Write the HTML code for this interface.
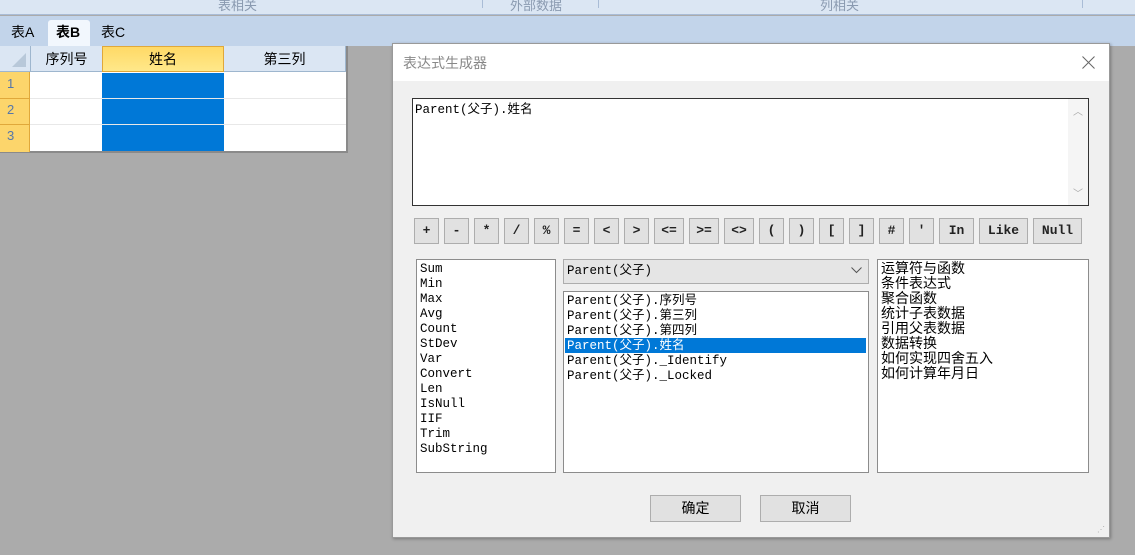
<!DOCTYPE html>
<html><head><meta charset="utf-8"><style>
*{margin:0;padding:0;box-sizing:border-box}
body{width:1135px;height:555px;overflow:hidden;background:#ababab;position:relative;font-family:"Liberation Sans","Noto Sans CJK SC",sans-serif;font-size:13px;color:#000}
.a{position:absolute}
.mono{font-family:"Liberation Mono","Noto Sans CJK SC",monospace;font-size:12.5px;line-height:15px;white-space:pre}
.btn{position:absolute;top:218px;height:26px;background:#e1e1e1;border:1px solid #adadad;text-align:center;line-height:23px;font-family:"Liberation Mono","Noto Sans CJK SC",monospace;font-size:13px;font-weight:bold;color:#222}
</style></head><body>
<div class="a" style="left:0;top:0;width:1135px;height:15px;background:#dbe6f3;border-bottom:1px solid #a9bcd6"></div>
<div class="a" style="left:218px;top:-5px;color:#8a9ab0;font-size:13px">表相关</div>
<div class="a" style="left:510px;top:-5px;color:#8a9ab0;font-size:13px">外部数据</div>
<div class="a" style="left:820px;top:-5px;color:#8a9ab0;font-size:13px">列相关</div>
<div class="a" style="left:482px;top:0;width:1px;height:8px;background:#a9bcd6"></div>
<div class="a" style="left:598px;top:0;width:1px;height:8px;background:#a9bcd6"></div>
<div class="a" style="left:1082px;top:0;width:1px;height:8px;background:#a9bcd6"></div>
<div class="a" style="left:0;top:16px;width:1135px;height:30px;background:#c2d4ea"></div>
<div class="a" style="left:48px;top:20px;width:42px;height:27px;background:#f2f7fd;border-radius:3px 3px 0 0"></div>
<div class="a" style="left:11px;top:22px;font-size:14px">表A</div>
<div class="a" style="left:56px;top:22px;font-size:14px;font-weight:bold">表B</div>
<div class="a" style="left:101px;top:22px;font-size:14px">表C</div>
<div class="a" style="left:0;top:46px;width:348px;height:107px;background:#fff;border-right:2px solid #8a8a8a;border-bottom:2px solid #8a8a8a"></div>
<div class="a" style="left:0;top:46px;width:346px;height:26px;background:#dbe6f3;border-bottom:1px solid #9eb6ce"></div>
<div class="a" style="left:12px;top:53px;width:0;height:0;border-left:14px solid transparent;border-bottom:14px solid #b8c8d9"></div>
<div class="a" style="left:30px;top:46px;width:72px;height:26px;border-left:1px solid #9eb6ce;text-align:center;line-height:26px;font-size:14px">序列号</div>
<div class="a" style="left:102px;top:46px;width:122px;height:26px;background:linear-gradient(#ffd966,#ffe88a);border:1px solid #e0a83a;text-align:center;line-height:24px;font-size:14px">姓名</div>
<div class="a" style="left:224px;top:46px;width:122px;height:26px;border-right:1px solid #9eb6ce;text-align:center;line-height:26px;font-size:14px">第三列</div>
<div class="a" style="left:0;top:72px;width:30px;height:80px;background:#fcd56b;border-right:1px solid #e0a83a"></div>
<div class="a" style="left:7px;top:76px;color:#5577aa;font-size:13px">1</div>
<div class="a" style="left:7px;top:102px;color:#5577aa;font-size:13px">2</div>
<div class="a" style="left:7px;top:128px;color:#5577aa;font-size:13px">3</div>
<div class="a" style="left:0;top:98px;width:346px;height:1px;background:#e8e8e8"></div>
<div class="a" style="left:0;top:124px;width:346px;height:1px;background:#e8e8e8"></div>
<div class="a" style="left:0;top:98px;width:30px;height:1px;background:#e0a83a"></div>
<div class="a" style="left:0;top:124px;width:30px;height:1px;background:#e0a83a"></div>
<div class="a" style="left:102px;top:73px;width:122px;height:25px;background:#0078d7"></div>
<div class="a" style="left:102px;top:99px;width:122px;height:25px;background:#0078d7"></div>
<div class="a" style="left:102px;top:125px;width:122px;height:26px;background:#0078d7"></div>
<div class="a" style="left:392px;top:43px;width:718px;height:495px;background:#f0f0f0;border:1px solid #999;box-shadow:1px 1px 3px rgba(0,0,0,.3)"></div>
<div class="a" style="left:393px;top:44px;width:716px;height:37px;background:#fff"></div>
<div class="a" style="left:403px;top:53px;color:#888;font-size:14px">表达式生成器</div>
<svg class="a" style="left:1082px;top:56px" width="13" height="13"><path d="M0.5 0.5L12.5 12.5M12.5 0.5L0.5 12.5" stroke="#666" stroke-width="1"/></svg>
<div class="a" style="left:412px;top:98px;width:677px;height:108px;background:#fff;border:1px solid #333"></div>
<div class="a" style="left:1068px;top:99px;width:20px;height:106px;background:#f5f5f5"></div>
<div class="a" style="left:1073px;top:103px;color:#aaa;font-size:10px">︿</div>
<div class="a" style="left:1073px;top:185px;color:#aaa;font-size:10px">﹀</div>
<div class="a mono" style="left:415px;top:103px">Parent(父子).姓名</div>
<div class="btn" style="left:414px;width:25px">+</div>
<div class="btn" style="left:444px;width:25px">-</div>
<div class="btn" style="left:474px;width:25px">*</div>
<div class="btn" style="left:504px;width:25px">/</div>
<div class="btn" style="left:534px;width:25px">%</div>
<div class="btn" style="left:564px;width:25px">=</div>
<div class="btn" style="left:594px;width:25px">&lt;</div>
<div class="btn" style="left:624px;width:25px">&gt;</div>
<div class="btn" style="left:654px;width:30px">&lt;=</div>
<div class="btn" style="left:689px;width:30px">&gt;=</div>
<div class="btn" style="left:724px;width:30px">&lt;&gt;</div>
<div class="btn" style="left:759px;width:25px">(</div>
<div class="btn" style="left:789px;width:25px">)</div>
<div class="btn" style="left:819px;width:25px">[</div>
<div class="btn" style="left:849px;width:25px">]</div>
<div class="btn" style="left:879px;width:25px">#</div>
<div class="btn" style="left:909px;width:25px">'</div>
<div class="btn" style="left:939px;width:35px">In</div>
<div class="btn" style="left:979px;width:49px">Like</div>
<div class="btn" style="left:1033px;width:49px">Null</div>
<div class="a" style="left:416px;top:259px;width:140px;height:214px;background:#fff;border:1px solid #8c8c8c"></div>
<div class="a mono" style="left:420px;top:262px">Sum
Min
Max
Avg
Count
StDev
Var
Convert
Len
IsNull
IIF
Trim
SubString</div>
<div class="a" style="left:563px;top:259px;width:306px;height:25px;background:#e5e5e5;border:1px solid #adadad"></div>
<div class="a mono" style="left:567px;top:264px">Parent(父子)</div>
<svg class="a" style="left:851px;top:267px" width="11" height="7"><path d="M0.5 0.5L5.5 5.5L10.5 0.5" stroke="#555" fill="none"/></svg>
<div class="a" style="left:563px;top:291px;width:306px;height:182px;background:#fff;border:1px solid #8c8c8c"></div>
<div class="a" style="left:565px;top:338px;width:301px;height:15px;background:#0078d7"></div>
<div class="a mono" style="left:567px;top:294px">Parent(父子).序列号
Parent(父子).第三列
Parent(父子).第四列
<span style="color:#fff">Parent(父子).姓名</span>
Parent(父子)._Identify
Parent(父子)._Locked</div>
<div class="a" style="left:877px;top:259px;width:212px;height:214px;background:#fff;border:1px solid #8c8c8c"></div>
<div class="a" style="left:881px;top:261px;font-size:14px;line-height:15px;white-space:pre">运算符与函数
条件表达式
聚合函数
统计子表数据
引用父表数据
数据转换
如何实现四舍五入
如何计算年月日</div>
<div class="a" style="left:650px;top:495px;width:91px;height:27px;background:#e1e1e1;border:1px solid #adadad;text-align:center;line-height:25px;font-size:14px">确定</div>
<div class="a" style="left:760px;top:495px;width:91px;height:27px;background:#e1e1e1;border:1px solid #adadad;text-align:center;line-height:25px;font-size:14px">取消</div>
<div class="a" style="left:1097px;top:525px;color:#aaa;font-size:8px">⋰</div>
</body></html>
